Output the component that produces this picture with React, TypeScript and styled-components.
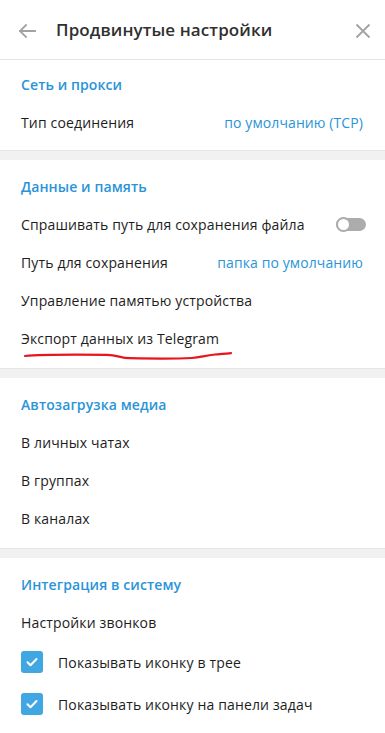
import styled, { createGlobalStyle } from 'styled-components';

const Accent = '#2a94d8';
const TextColor = '#1d1d1d';
const IconColor = '#a2a2a2';

const GlobalStyle = createGlobalStyle`
    html, body {
        margin: 0;
        padding: 0;
        background: #ffffff;
    }
    body {
        font-family: 'Open Sans', 'Noto Sans', sans-serif;
        -webkit-font-smoothing: antialiased;
    }
`;

interface SectionData {
    title: string;
    first?: boolean;
}

const BackIcon = () => (
    <svg width="18" height="14" viewBox="0 0 18 14" fill="none">
        <path
            d="M17 7H2M8 1L2 7l6 6"
            stroke={IconColor}
            strokeWidth="1.8"
            strokeLinecap="square"
        />
    </svg>
);

const CloseIcon = () => (
    <svg width="16" height="16" viewBox="0 0 16 16" fill="none">
        <path d="M1.5 1.5l13 13M14.5 1.5l-13 13" stroke={IconColor} strokeWidth="1.8" />
    </svg>
);

const CheckIcon = () => (
    <svg width="12" height="10" viewBox="0 0 12 10" fill="none">
        <path
            d="M1.5 5.2l3 3L10.5 2"
            stroke="#ffffff"
            strokeWidth="2"
            strokeLinecap="round"
            strokeLinejoin="round"
        />
    </svg>
);

const Scribble = () => (
    <ScribbleSvg width="240" height="12" viewBox="0 0 240 12" fill="none">
        <path
            d="M25 5 C 40 3.5, 80 3.5, 107 3.8 C 118 4, 120 7, 130 7.2 C 150 7.6, 175 7.8, 192 7 C 200 6.5, 205 4.5, 215 3.5 C 222 3, 228 2.6, 231 2.2"
            stroke="#e8141e"
            strokeWidth="2.2"
            strokeLinecap="round"
        />
    </ScribbleSvg>
);

const Section = ({
    title,
    first,
    children,
}: SectionData & { children: React.ReactNode }) => (
    <SectionBox $first={first}>
        <SectionTitle>{title}</SectionTitle>
        {children}
    </SectionBox>
);

const App = () => {
    return (
        <Page>
            <GlobalStyle />
            <Header>
                <IconButton>
                    <BackIcon />
                </IconButton>
                <Title>Продвинутые настройки</Title>
                <CloseButton>
                    <CloseIcon />
                </CloseButton>
            </Header>

            <Section title="Сеть и прокси" first>
                <Row>
                    <Label>Тип соединения</Label>
                    <Value>по умолчанию (TCP)</Value>
                </Row>
            </Section>
            <Divider />

            <Section title="Данные и память">
                <Row>
                    <Label>Спрашивать путь для сохранения файла</Label>
                    <Toggle>
                        <Knob />
                    </Toggle>
                </Row>
                <Row>
                    <Label>Путь для сохранения</Label>
                    <Value>папка по умолчанию</Value>
                </Row>
                <Row>
                    <Label>Управление памятью устройства</Label>
                </Row>
                <Row>
                    <Label>Экспорт данных из Telegram</Label>
                    <Scribble />
                </Row>
            </Section>
            <Divider />

            <Section title="Автозагрузка медиа">
                <Row>
                    <Label>В личных чатах</Label>
                </Row>
                <Row>
                    <Label>В группах</Label>
                </Row>
                <Row>
                    <Label>В каналах</Label>
                </Row>
            </Section>
            <Divider />

            <Section title="Интеграция в систему">
                <Row>
                    <Label>Настройки звонков</Label>
                </Row>
                <CheckRow>
                    <CheckBox>
                        <CheckIcon />
                    </CheckBox>
                    <Label>Показывать иконку в трее</Label>
                </CheckRow>
                <CheckRow>
                    <CheckBox>
                        <CheckIcon />
                    </CheckBox>
                    <Label>Показывать иконку на панели задач</Label>
                </CheckRow>
            </Section>
        </Page>
    );
};

const Page = styled.div`
    width: 385px;
    min-height: 733px;
    background: #ffffff;
    display: flex;
    flex-direction: column;
`;

const Header = styled.div`
    display: flex;
    align-items: center;
    border-bottom: 1px solid #e3e3e3;
    padding: 0 14px 0 18px;
    box-sizing: border-box;
    height: 60px;
`;

const IconButton = styled.div`
    width: 38px;
    display: flex;
    align-items: center;
    padding-top: 2px;
`;

const CloseButton = styled.div`
    margin-left: auto;
    display: flex;
    align-items: center;
    padding-top: 2px;
`;

const Title = styled.div`
    font-size: 17px;
    font-weight: 600;
    color: #303030;
    letter-spacing: 0.1px;
`;

const SectionBox = styled.div<{ $first?: boolean }>`
    display: flex;
    flex-direction: column;
    padding: ${(p) => (p.$first ? '5px 0 9px' : '7px 0 11px')};
`;

const SectionTitle = styled.div`
    height: 38px;
    display: flex;
    align-items: center;
    padding: 0 21px;
    font-size: 14px;
    font-weight: 600;
    color: ${Accent};
    letter-spacing: 0.1px;
`;

const Row = styled.div`
    position: relative;
    height: 38px;
    display: flex;
    align-items: center;
    justify-content: space-between;
    padding: 0 19px 0 21px;
`;

const CheckRow = styled.div`
    height: 42px;
    display: flex;
    align-items: center;
    gap: 15px;
    padding: 0 21px;
`;

const Label = styled.div`
    font-size: 14px;
    color: ${TextColor};
    letter-spacing: 0.15px;
`;

const Value = styled.div`
    font-size: 14px;
    color: ${Accent};
    margin-right: 3px;
    letter-spacing: 0.1px;
`;

const Divider = styled.div`
    height: 10px;
    background: #f1f1f1;
    border-top: 1px solid #e6e6e6;
    box-sizing: border-box;
`;

const Toggle = styled.div`
    width: 30px;
    height: 13px;
    border-radius: 7px;
    background: #acacac;
    display: flex;
    align-items: center;
`;

const Knob = styled.div`
    width: 15px;
    height: 15px;
    border-radius: 50%;
    background: #ffffff;
    border: 2px solid #acacac;
    box-sizing: border-box;
`;

const CheckBox = styled.div`
    width: 22px;
    height: 22px;
    border-radius: 3px;
    background: #40a7e3;
    display: flex;
    align-items: center;
    justify-content: center;
    flex-shrink: 0;
`;

const ScribbleSvg = styled.svg`
    position: absolute;
    left: 0;
    top: 32px;
    pointer-events: none;
`;

export default App;
